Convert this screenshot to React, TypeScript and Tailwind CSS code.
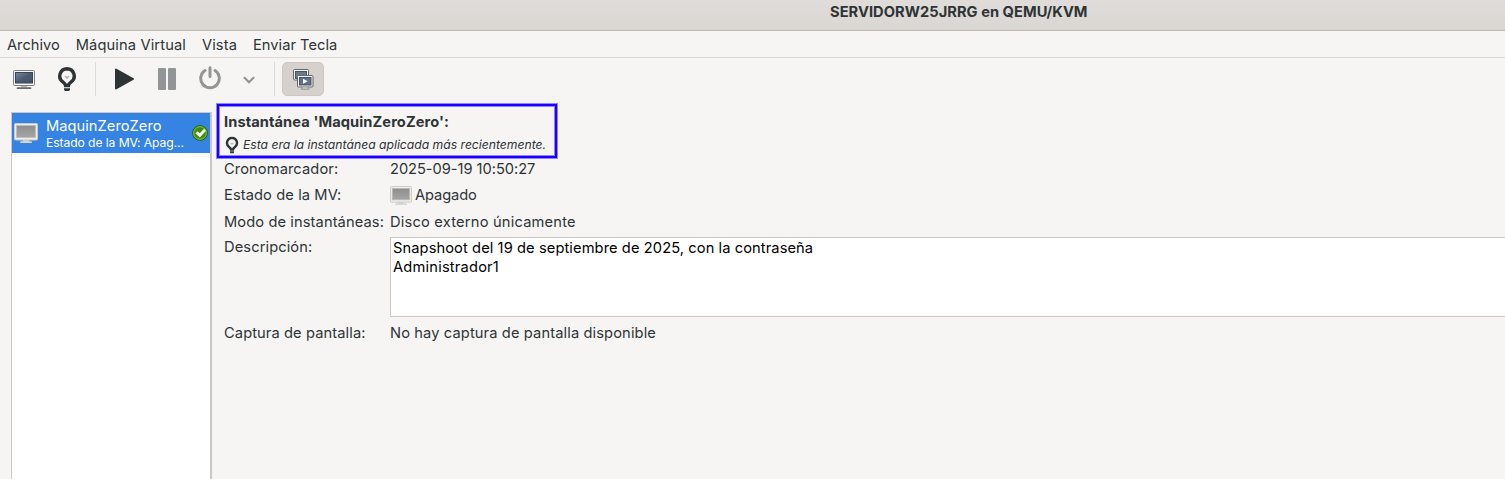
import React from "react";

function Bulb({ className }: { className: string }) {
  return (
    <svg viewBox="0 0 20 26" className={className}>
      <path
        d="M10 2.700a7.300 7.300 0 0 0-4.200 13.200c1.500 1.100 2.400 2 2.700 3.600h3c.3-1.600 1.200-2.500 2.700-3.600A7.300 7.300 0 0 0 10 2.700Z"
        fill="#f6f5f4"
        stroke="#2e3436"
        strokeWidth="3.400"
      />
      <path d="M8 10 10 12l2-2" fill="none" stroke="#b4b6b6" strokeWidth="1.600" />
      <path d="M7 22.200h6v1.600L12 25H8L7 23.800Z" fill="#2e3436" />
    </svg>
  );
}

function GrayMonitor({ className }: { className: string }) {
  return (
    <svg viewBox="0 0 24 21" preserveAspectRatio="none" className={className}>
      <defs>
        <linearGradient id="off-screen" x1="0" y1="0" x2="0" y2="1">
          <stop offset="0" stopColor="#8d8d8d" />
          <stop offset="1" stopColor="#a6a6a6" />
        </linearGradient>
      </defs>
      <path d="M9 17h6v1.500h3V20H6v-1.500h3Z" fill="#c9c9c7" />
      <path d="M7 19h10" stroke="#e2e2e0" />
      <rect x="0.500" y="0.500" width="23" height="16.500" rx="1" fill="#eeeeec" stroke="#c8c8c5" />
      <rect x="2.500" y="2.500" width="19" height="12" fill="url(#off-screen)" stroke="#bcbcba" strokeWidth="0.800" />
    </svg>
  );
}

function Console() {
  return (
    <svg viewBox="0 0 22 20" className="mt-0.5 h-5 w-[22px]">
      <defs>
        <linearGradient id="on-screen" x1="0" y1="0" x2="1" y2="1">
          <stop offset="0" stopColor="#7b899d" />
          <stop offset="0.500" stopColor="#4c5b72" />
          <stop offset="1" stopColor="#43526a" />
        </linearGradient>
      </defs>
      <rect x="0.500" y="0.500" width="21" height="15" rx="1.200" fill="#f4f4f2" stroke="#80827e" />
      <rect x="2.500" y="2.500" width="17" height="10.500" fill="url(#on-screen)" stroke="#35435a" />
      <path d="M8 16h6v1.500H8Z" fill="#b8b9b5" />
      <path d="M4.500 18.200h13" stroke="#696b66" strokeWidth="1.800" strokeLinecap="round" />
    </svg>
  );
}

function Snapshots() {
  return (
    <svg viewBox="0 0 22 22" className="h-[22px] w-[22px]">
      <rect x="1.500" y="1.500" width="15" height="10.500" rx="1" fill="#f4f4f2" stroke="#656762" />
      <rect x="3.500" y="3.500" width="11" height="7" fill="#6b798f" stroke="#46546a" />
      <rect x="5.500" y="7.500" width="15.500" height="11.500" rx="1" fill="#f4f4f2" stroke="#656762" />
      <rect x="7.500" y="9.500" width="11.500" height="7.500" fill="#627188" stroke="#46546a" />
      <path d="M11 10.800v5l4.700-2.500Z" fill="#fff" />
      <path d="M9 21h8.500" stroke="#8b8c88" strokeWidth="1.200" />
      <path d="M11 20h4.500" stroke="#d8d8d5" />
    </svg>
  );
}

function Check() {
  return (
    <svg viewBox="0 0 16 16" className="h-4 w-4">
      <circle cx="8" cy="8" r="7.400" fill="#3d8c0c" stroke="#2a6200" />
      <circle cx="8" cy="8" r="6.300" fill="none" stroke="#8fc663" strokeWidth="0.900" />
      <path d="M3.500 8.300 5.500 6.300l2.300 2L12 3.700l2 2-6.100 6.800Z" fill="#f4f8f0" />
    </svg>
  );
}

function Row({ label, className, children }: { label: string; className: string; children: React.ReactNode }) {
  return (
    <div className={`flex ${className}`}>
      <div className="w-[166px] shrink-0 tracking-[0.1px]">{label}</div>
      {children}
    </div>
  );
}

export default function App() {
  return (
    <div className="flex h-[479px] w-[1505px] flex-col overflow-hidden bg-[#f6f5f4] font-['Inter',sans-serif] text-[14.667px] leading-5 whitespace-nowrap text-[#2e3436]">
      <header className="h-[31px] shrink-0 border-b border-[#bfb8b1] bg-linear-to-b from-[#e0dcd9] to-[#dad6d2] pt-0.5 pl-[830px] font-bold tracking-[0.04px]">
        SERVIDORW25JRRG en QEMU/KVM
      </header>
      <nav className="flex h-[27px] shrink-0 gap-4 border-b border-[#dcdad8] pt-1 pl-[7px]">
        <span>Archivo</span>
        <span className="tracking-[0.13px]">Máquina Virtual</span>
        <span className="tracking-[0.1px]">Vista</span>
        <span className="tracking-[0.03px]">Enviar Tecla</span>
      </nav>
      <div className="flex h-[45px] shrink-0 pt-1">
        <div className="flex h-[34px] w-[95px] items-center pl-[13px]">
          <Console />
          <Bulb className="ml-[22px] h-[26px] w-5" />
        </div>
        <div className="flex h-[34px] w-[180px] items-center border-l border-[#dcdad8] pl-[18px]">
          <svg viewBox="0 0 20 22" className="h-[22px] w-5">
            <path d="M2 1.500v19L19 11Z" fill="#2e3436" stroke="#2e3436" strokeWidth="2" strokeLinejoin="round" />
          </svg>
          <svg viewBox="0 0 18 22" className="ml-6 h-[22px] w-[18px]" fill="#929595">
            <rect width="8" height="22" rx="1" />
            <rect x="10" width="8" height="22" rx="1" />
          </svg>
          <svg viewBox="0 0 22 24" className="mb-0.5 ml-[23px] h-6 w-[22px]" fill="none" stroke="#929595" strokeWidth="3">
            <path d="M6 4.600a9.300 9.300 0 1 0 10 0M11 1.800v8.700" strokeLinecap="round" />
          </svg>
          <svg viewBox="0 0 12 8" className="mt-0.5 ml-[22px] h-2 w-3" fill="none" stroke="#929595" strokeWidth="2.200">
            <path d="M1.500 1.800 6 6.300l4.500-4.500" strokeLinecap="round" />
          </svg>
        </div>
        <div className="-ml-px flex h-[34px] border-l border-[#dcdad8] pl-[7px]">
          <button className="flex h-[34px] w-[42px] items-center justify-center rounded-[5px] border border-[#cdc7c2] bg-[#d6d1cd]">
            <Snapshots />
          </button>
        </div>
      </div>
      <main className="flex min-h-0 flex-1">
        <aside className="mt-[9px] ml-[11px] w-[201px] shrink-0 border-t border-r-2 border-l border-[#cdc7c2] bg-white">
          <div className="flex h-10 bg-[#3584e4] text-white">
            <GrayMonitor className="mt-2.5 ml-0.5 h-[21px] w-6 shrink-0" />
            <div className="w-[154px] pt-[3px] pl-2">
              <div className="tracking-[0.04px]">MaquinZeroZero</div>
              <div className="-mt-0.5 text-[12.200px] leading-[18px] tracking-[-0.11px]">Estado de la MV: Apag...</div>
            </div>
            <div className="pt-3">
              <Check />
            </div>
          </div>
        </aside>
        <section className="flex min-w-0 flex-1 flex-col pl-1">
          <div className="h-14 w-[342px] shrink-0 border border-[#8f84fb]">
            <div className="h-full border-2 border-[#1a00ff]">
              <div className="h-full border border-[#8f84fb] pt-[5px] pl-1">
                <div className="font-bold tracking-[0.08px]">Instantánea 'MaquinZeroZero':</div>
                <div className="mt-[3px] flex items-center text-[12.200px] italic">
                  <Bulb className="mr-1 ml-px h-[18px] w-[14px]" />
                  <span className="tracking-[-0.02px]">Esta era la instantánea aplicada más recientemente.</span>
                </div>
              </div>
            </div>
          </div>
          <div className="pl-2">
            <Row label="Cronomarcador:" className="h-[26px]">
              <span className="tracking-[-0.04px]">2025-09-19 10:50:27</span>
            </Row>
            <Row label="Estado de la MV:" className="h-[27px]">
              <GrayMonitor className="mt-px mr-[3px] h-5 w-[22px]" />
              <span className="tracking-[-0.1px]">Apagado</span>
            </Row>
            <Row label="Modo de instantáneas:" className="h-[25px]">
              <span className="tracking-[0.2px]">Disco externo únicamente</span>
            </Row>
            <Row label="Descripción:" className="h-[86px]">
              <div className="h-20 flex-1 border border-r-0 border-[#cdc7c2] bg-white pt-px pl-0.5 leading-[19px] tracking-[0.09px] text-black">
                Snapshoot del 19 de septiembre de 2025, con la contraseña
                <br />
                <span className="tracking-[0.2px]">Administrador1</span>
              </div>
            </Row>
            <Row label="Captura de pantalla:" className="h-5">
              <span className="tracking-[0.12px]">No hay captura de pantalla disponible</span>
            </Row>
          </div>
        </section>
      </main>
    </div>
  );
}
